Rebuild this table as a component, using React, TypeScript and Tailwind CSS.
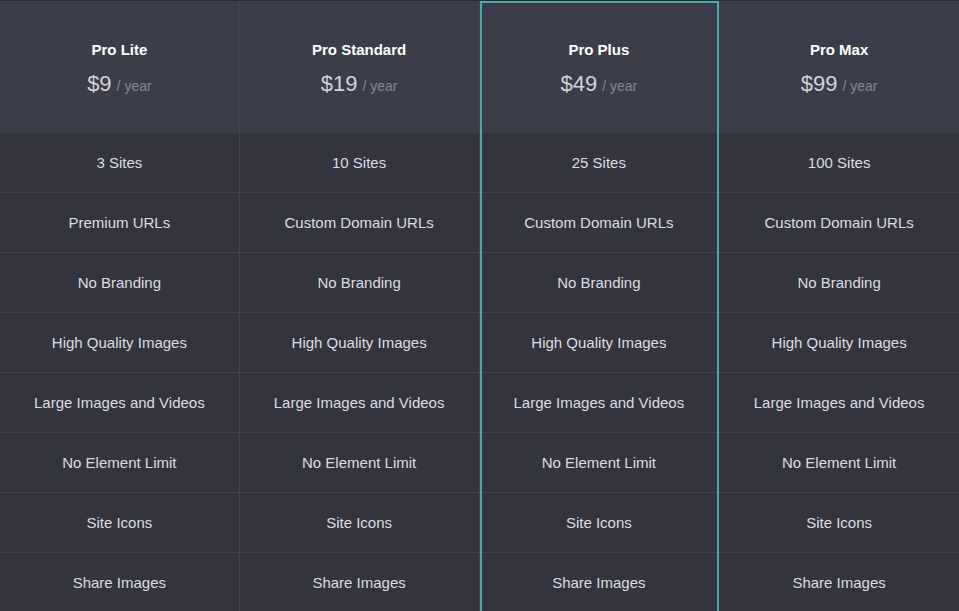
import React from "react";

const plans = [
  { name: "Pro Lite", price: "$9", sites: "3 Sites", urls: "Premium URLs" },
  { name: "Pro Standard", price: "$19", sites: "10 Sites", urls: "Custom Domain URLs" },
  { name: "Pro Plus", price: "$49", sites: "25 Sites", urls: "Custom Domain URLs", featured: true },
  { name: "Pro Max", price: "$99", sites: "100 Sites", urls: "Custom Domain URLs" },
];

const common = [
  "No Branding",
  "High Quality Images",
  "Large Images and Videos",
  "No Element Limit",
  "Site Icons",
  "Share Images",
];

export default function App() {
  return (
    <div
      className="w-[959px] h-[611px] overflow-hidden bg-[#34343f] border-t border-[#2a2b34]"
      style={{ fontFamily: '"Liberation Sans", Arial, sans-serif' }}
    >
      <div className="grid grid-cols-4">
        {plans.map((p, i) => (
          <div
            key={p.name}
            className={
              "flex flex-col " +
              (i < 3 ? "border-r border-[#42434f] " : "") +
              (p.featured ? "outline-2 outline-[#4aaaa8] -outline-offset-2 relative z-10" : "")
            }
          >
            <div className="h-[132px] bg-[#3c3d4a] flex flex-col items-center pt-[39px]">
              <div className="text-[15px] leading-5 font-bold text-white">{p.name}</div>
              <div className="mt-[11px] flex items-baseline gap-[5px] leading-[26px]">
                <span className="text-[22px] text-[#d2d2da]">{p.price}</span>
                <span className="text-[14px] text-[#868791]">/ year</span>
              </div>
            </div>
            {[p.sites, p.urls, ...common].map((f, j) => (
              <div
                key={j}
                className="h-[60px] pt-[2px] flex items-center justify-center border-b border-[#42434f] text-[15px] text-[#dcdce2]"
              >
                {f}
              </div>
            ))}
          </div>
        ))}
      </div>
    </div>
  );
}
